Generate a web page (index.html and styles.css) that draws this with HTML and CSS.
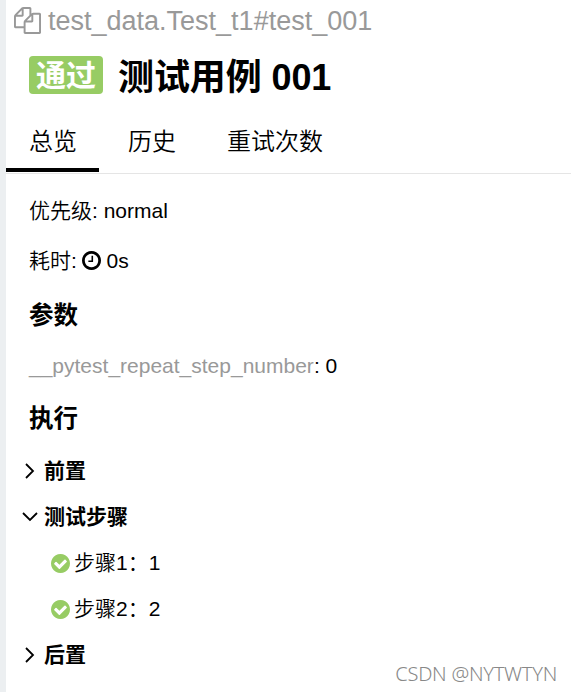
FILE: index.html
```html
<!DOCTYPE html>
<html lang="zh-CN">

<head>
    <meta charset="utf-8">
    <meta name="viewport" content="width=device-width, initial-scale=1.0">
    <title>测试用例 001</title>
    <link rel="stylesheet" href="styles.css">
</head>

<body>
    <svg class="symbols" xmlns="http://www.w3.org/2000/svg">
        <symbol id="check" viewBox="128 128 1536 1536">
            <path d="M1412 734q0-28-18-46l-91-90q-19-19-45-19t-45 19l-408 407-226-226q-19-19-45-19t-45 19l-91 90q-18 18-18 46 0 27 18 45l362 362q19 19 45 19 27 0 46-19l543-543q18-18 18-45zm252 162q0 209-103 385.5t-279.5 279.5-385.5 103-385.5-103-279.5-279.5-103-385.5 103-385.5 279.5-279.5 385.5-103 385.5 103 279.5 279.5 103 385.5z"/>
        </symbol>
        <symbol id="arrow" viewBox="0 0 16 16">
            <path d="M4 1L11 8L4 15" fill="none" stroke="#000" stroke-width="1.8"/>
        </symbol>
    </svg>

    <main class="testcase">
        <div class="fullname">
            <svg class="copy" viewBox="0 0 1792 1792"><path d="M1696 384q40 0 68 28t28 68v1216q0 40-28 68t-68 28h-960q-40 0-68-28t-28-68v-288h-544q-40 0-68-28t-28-68v-672q0-40 20-88t48-76l408-408q28-28 76-48t88-20h416q40 0 68 28t28 68v328q68-40 128-40h416zm-544 213l-299 299h299v-299zm-640-384l-299 299h299v-299zm196 647l316-316v-416h-384v416q0 40-28 68t-68 28h-416v640h512v-256q0-40 20-88t48-76zm956 804v-1152h-384v416q0 40-28 68t-68 28h-416v640h896z"/></svg>
            <span>test_data.Test_t1#test_001</span>
        </div>

        <h1><span class="status">通过</span><span class="name">测试用例 001</span></h1>

        <nav class="tabs">
            <a class="tab active">总览</a>
            <a class="tab">历史</a>
            <a class="tab">重试次数</a>
        </nav>

        <section class="overview">
            <p>优先级: normal</p>
            <p>耗时: <svg class="clock" viewBox="128 128 1536 1536"><path d="M1024 544v448q0 14-9 23t-23 9h-320q-14 0-23-9t-9-23v-64q0-14 9-23t23-9h224v-352q0-14 9-23t23-9h64q14 0 23 9t9 23zm416 352q0-148-73-273t-198-198-273-73-273 73-198 198-73 273 73 273 198 198 273 73 273-73 198-198 73-273zm224 0q0 209-103 385.5t-279.5 279.5-385.5 103-385.5-103-279.5-279.5-103-385.5 103-385.5 279.5-279.5 385.5-103 385.5 103 279.5 279.5 103 385.5z"/></svg> 0s</p>
            <h2>参数</h2>
            <p><span class="param">__pytest_repeat_step_number</span>: 0</p>
            <h2>执行</h2>
        </section>

        <section class="steps">
            <h3><svg class="arrow"><use href="#arrow"/></svg>前置</h3>
            <h3><svg class="arrow open"><use href="#arrow"/></svg>测试步骤</h3>
            <div class="step"><svg class="passed"><use href="#check"/></svg>步骤1：1</div>
            <div class="step"><svg class="passed"><use href="#check"/></svg>步骤2：2</div>
            <h3><svg class="arrow"><use href="#arrow"/></svg>后置</h3>
        </section>
    </main>

    <div class="watermark">CSDN @NYTWTYN</div>
</body>

</html>
```
FILE: styles.css
```css
* {
    box-sizing: border-box;
}

body {
    margin: 0;
    height: 692px;
    overflow: hidden;
    background: #fff;
    color: #000;
    font-family: "Liberation Sans", "Noto Sans CJK SC", sans-serif;
    font-size: 21px;
    font-weight: 350;
}

h1, h2, h3, p {
    margin: 0;
}

.symbols {
    display: none;
}

.testcase {
    height: 692px;
    border-left: 6px solid #eceff1;
}

.fullname {
    display: flex;
    align-items: center;
    height: 41px;
    padding-left: 8px;
    color: #999;
    font-size: 27px;
}

.fullname span {
    padding-top: 1px;
}

.copy {
    width: 27px;
    height: 27px;
    margin-right: 7px;
    fill: #999;
}

h1 {
    display: flex;
    align-items: center;
    height: 69px;
    padding-left: 23px;
    font-size: 36px;
    line-height: 40px;
}

.status {
    width: 74px;
    height: 38px;
    margin: 0 15px 2px 0;
    border-radius: 4px;
    background: #97cc64;
    color: #fff;
    font-size: 30px;
    line-height: 39px;
    text-align: center;
}

.name {
    padding-top: 4px;
    letter-spacing: -0.1px;
}

.tabs {
    display: flex;
    gap: 6px;
    height: 64px;
    border-bottom: 1px solid #e5e5e5;
}

.tab {
    height: 62px;
    padding: 0 22px 0 23px;
    border-bottom: 4px solid transparent;
    font-size: 24px;
    line-height: 64px;
}

.active {
    border-color: #000;
}

.overview {
    padding: 12px 0 0 23px;
}

.overview p {
    height: 50px;
    line-height: 50px;
}

.overview h2 {
    height: 54px;
    font-size: 24.5px;
    line-height: 59px;
}

.overview h2 + p {
    height: 49px;
    line-height: 52px;
}

.clock {
    width: 19px;
    height: 19px;
    margin-left: -1px;
    vertical-align: -2px;
}

.param {
    color: #999;
}

.steps {
    padding-top: 5px;
}

.steps h3,
.step {
    display: flex;
    align-items: center;
    height: 46px;
    font-size: 21px;
    line-height: 46px;
}

.steps h3 {
    padding-left: 16px;
}

.arrow {
    width: 16px;
    height: 16px;
    margin-right: 6px;
}

.open {
    transform: rotate(90deg);
}

.step {
    padding-left: 45px;
}

.passed {
    width: 19px;
    height: 19px;
    margin-right: 4px;
    fill: #97cc64;
}

.watermark {
    position: absolute;
    right: 14px;
    bottom: 4px;
    color: #888;
    font: 300 20px/28px "Noto Sans", sans-serif;
    letter-spacing: -0.25px;
}
```
